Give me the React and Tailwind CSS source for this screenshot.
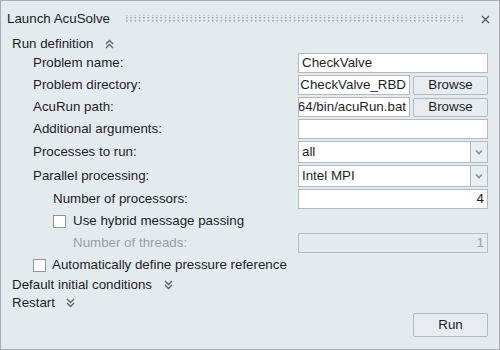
import { useState } from 'react'

function Chevrons({ up = false }) {
  return (
    <svg width="9" height="10" viewBox="0 0 9 10" className={up ? '' : 'rotate-180'}>
      <path d="M1 5 L4.5 1.5 L8 5 M1 9 L4.5 5.5 L8 9" fill="none" stroke="#5f6469" strokeWidth="1.4" />
    </svg>
  )
}

function Grip() {
  return (
    <svg className="h-[10px] flex-1" height="10">
      <defs>
        <pattern id="grip" width="4.3" height="3" patternUnits="userSpaceOnUse">
          <rect x="0" y="0" width="1.5" height="1.5" fill="#9ba2a7" />
        </pattern>
      </defs>
      <rect x="0" y="1" width="100%" height="8" fill="url(#grip)" />
    </svg>
  )
}

function TextField({ value = '', align = 'left', clipStart = false, disabled = false, className = 'w-[190px]' }) {
  return (
    <div
      className={`flex h-[20px] items-center overflow-hidden border px-[3px] ${
        disabled ? 'border-[#b9bec2] bg-[#e4ebef] text-[#9aa0a5]' : 'border-[#b4b9bd] bg-white text-[#1e1e1e]'
      } ${align === 'right' || clipStart ? 'justify-end' : 'justify-start'} ${className}`}
    >
      <span className="whitespace-nowrap">{value}</span>
    </div>
  )
}

function Select({ value }) {
  return (
    <div className="flex h-[22px] w-[190px]">
      <div className="flex flex-1 items-center border border-[#b4b9bd] bg-white px-[3px] text-[#1e1e1e]">{value}</div>
      <div className="flex w-[17px] items-center justify-center border border-l-0 border-[#b4b9bd] bg-[#e9eef1]">
        <svg width="8" height="6" viewBox="0 0 8 6">
          <path d="M1 1.5 L4 4.5 L7 1.5" fill="none" stroke="#8a9096" strokeWidth="1.6" />
        </svg>
      </div>
    </div>
  )
}

function Button({ children, className = '' }) {
  return (
    <button className={`flex items-center justify-center rounded-[2px] border border-[#b4b9bd] bg-[#e6ecef] text-[#1e1e1e] ${className}`}>
      {children}
    </button>
  )
}

function Checkbox() {
  const [checked, setChecked] = useState(false)
  return (
    <span
      onClick={() => setChecked(!checked)}
      className="flex h-[13px] w-[13px] items-center justify-center border border-[#8f959a] bg-white text-[10px]"
    >
      {checked ? '✓' : ''}
    </span>
  )
}

function Row({ label, indent = 'pl-[32px]', children, h = 'h-[22px]' }) {
  return (
    <div className={`flex items-center justify-between pr-[11px] ${h} ${indent}`}>
      <span>{label}</span>
      {children}
    </div>
  )
}

export default function App() {
  return (
    <div
      className="h-[350px] w-[500px] border border-[#a9aeb2] bg-[#e4ebef] text-[13.33px] text-[#1e1e1e]"
      style={{ fontFamily: '"Liberation Sans", Arial, sans-serif' }}
    >
      <div className="mt-[8px] flex h-[20px] items-center gap-[16px] pl-[6px] pr-[9px]">
        <span>Launch AcuSolve</span>
        <Grip />
        <svg width="9" height="9" viewBox="0 0 9 9" className="ml-[2px]">
          <path d="M1 1 L8 8 M8 1 L1 8" stroke="#4f5459" strokeWidth="1.3" />
        </svg>
      </div>

      <div className="mt-[7px] flex h-[16px] items-center gap-[11px] pl-[11px]">
        <span>Run definition</span>
        <Chevrons up />
      </div>

      <Row label="Problem name:">
        <TextField value="CheckValve" />
      </Row>
      <Row label="Problem directory:">
        <div className="flex items-center gap-[3px]">
          <TextField value="CheckValve_RBD" clipStart className="h-[18px] w-[112px]" />
          <Button className="h-[19px] w-[75px]">Browse</Button>
        </div>
      </Row>
      <Row label="AcuRun path:">
        <div className="flex items-center gap-[3px]">
          <TextField value="64/bin/acuRun.bat" clipStart className="h-[19px] w-[112px]" />
          <Button className="h-[19px] w-[75px]">Browse</Button>
        </div>
      </Row>
      <Row label="Additional arguments:">
        <TextField />
      </Row>
      <Row label="Processes to run:" h="h-[24px]">
        <Select value="all" />
      </Row>
      <Row label="Parallel processing:" h="h-[24px]">
        <Select value="Intel MPI" />
      </Row>
      <Row label="Number of processors:" indent="pl-[52px]">
        <TextField value="4" align="right" />
      </Row>
      <div className="flex h-[22px] items-center gap-[7px] pl-[52px]">
        <Checkbox />
        <span>Use hybrid message passing</span>
      </div>
      <Row label={<span className="text-[#9aa0a5]">Number of threads:</span>} indent="pl-[72px]">
        <TextField value="1" align="right" disabled />
      </Row>
      <div className="flex h-[22px] items-center gap-[6px] pl-[32px]">
        <Checkbox />
        <span>Automatically define pressure reference</span>
      </div>
      <div className="flex h-[18px] items-center gap-[12px] pl-[11px]">
        <span>Default initial conditions</span>
        <Chevrons />
      </div>
      <div className="flex h-[18px] items-center gap-[11px] pl-[11px]">
        <span>Restart</span>
        <Chevrons />
      </div>
      <div className="flex justify-end pr-[11px] pt-[1px]">
        <Button className="h-[24px] w-[75px]">Run</Button>
      </div>
    </div>
  )
}
